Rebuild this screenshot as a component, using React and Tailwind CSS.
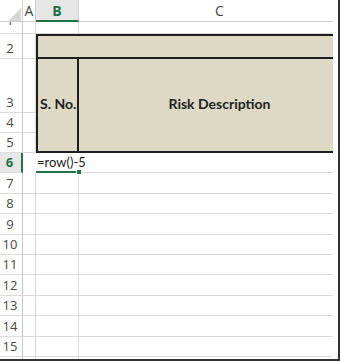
const rowFont = { fontFamily: '"Open Sans", "Noto Sans", sans-serif' }

const RowHead = ({ label, active, clip }) => (
  <div
    className={`relative flex items-end justify-center overflow-hidden border-b border-[#dcdcdc] pr-[2px] text-[13px] leading-[20px] ${
      active
        ? 'bg-[#e6e6e6] border-r-2 border-r-[#217346] font-bold text-[#217346]'
        : 'border-r border-r-[#c6c6c6] text-[#4a4a4a]'
    }`}
    style={rowFont}
  >
    <span className={clip ? '-translate-y-[3px]' : ''}>{label}</span>
  </div>
)

const Cell = ({ className = '' }) => (
  <div className={`border-r border-b border-[#dadada] ${className}`} />
)

const App = () => {
  const lowerRows = [7, 8, 9, 10, 11, 12, 13, 14, 15, 16]

  return (
    <div className="w-[341px] h-[362px] bg-white overflow-hidden">
      <div className="w-[340px] h-[361px] border-r-2 border-b-2 border-[#333] bg-white">
        <div className="w-[333px] h-[359px] overflow-hidden">
          <div
            className="grid grid-cols-[23px_13px_43px_281px] grid-rows-[22px_12px_25px_54px_20px_20px_repeat(11,20.4px)] text-[#222]"
            style={{ fontFamily: 'Lato, "Liberation Sans", sans-serif' }}
          >
            {/* column headers */}
            <div className="relative border-r border-b border-[#d0d0d0] bg-white">
              <svg className="absolute left-[8px] top-[8px]" width="13" height="13" viewBox="0 0 13 13">
                <polygon points="13,0 13,13 0,13" fill="#d7d7d7" />
              </svg>
            </div>
            <div
              className="flex items-center justify-center border-r border-b border-[#d0d0d0] text-[14px] text-[#444]"
              style={rowFont}
            >
              A
            </div>
            <div
              className="flex items-center justify-center border-r border-b-2 border-r-[#d0d0d0] border-b-[#217346] bg-[#e6e6e6] text-[14px] font-bold text-[#217346]"
              style={rowFont}
            >
              B
            </div>
            <div
              className="flex items-center justify-center border-b border-[#d0d0d0] text-[14px] text-[#444]"
              style={rowFont}
            >
              C
            </div>

            {/* row 1, scrolled mostly out of view */}
            <RowHead label="1" clip />
            <Cell />
            <Cell />
            <Cell />

            {/* row 2 */}
            <RowHead label="2" />
            <Cell />
            <div className="col-span-2 border-t-2 border-l-2 border-b-2 border-[#1e1e1e] bg-[#ddd9c4]" />

            {/* rows 3-5 merged */}
            <RowHead label="3" />
            <Cell />
            <div className="row-span-3 flex items-center border-l-2 border-r-2 border-b-2 border-[#1e1e1e] bg-[#ddd9c4] pl-[2px] pb-[2px] text-[14px] leading-[18px] font-bold">
              S. No.
            </div>
            <div className="row-span-3 flex items-center justify-center border-b-2 border-[#1e1e1e] bg-[#ddd9c4] pb-[2px] text-[14px] leading-[18px] font-bold">
              Risk Description
            </div>

            <RowHead label="4" />
            <Cell />
            <RowHead label="5" />
            <Cell />

            {/* row 6: editing B6 */}
            <RowHead label="6" active />
            <div />
            <div className="relative flex items-center border-b-2 border-[#217346] pl-[1px] text-[13px] leading-[18px] whitespace-nowrap">
              <span className="relative z-10">=row()-5</span>
              <span className="relative z-10 ml-[1px] h-[17px] w-[1px] bg-[#111]" />
              <span className="absolute right-[-3px] bottom-[-4px] h-[6px] w-[6px] border border-white bg-[#217346]" />
            </div>
            <Cell className="border-r-0" />

            {lowerRows.map((r) => (
              <div key={r} className="contents">
                <RowHead label={String(r)} />
                <Cell />
                <Cell />
                <Cell className="border-r-0" />
              </div>
            ))}
          </div>
        </div>
      </div>
    </div>
  )
}

export default App
